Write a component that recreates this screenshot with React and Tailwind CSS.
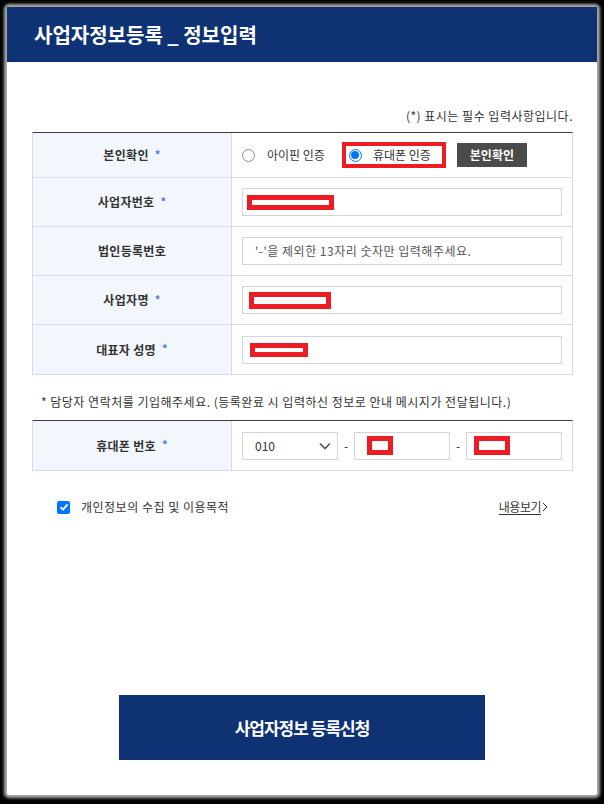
import React from 'react'

const font = { fontFamily: "'Noto Sans CJK KR', 'Noto Sans', sans-serif" }

function Star() {
  return <span className="ml-[6px] text-[11px] text-[#3f7ef0] relative -top-[1px]">*</span>
}

function Redact({ w, h = 15, className = '' }) {
  return <div className={`border-[5px] border-[#ed1c24] bg-white ${className}`} style={{ width: w, height: h }} />
}

function Field({ children, placeholder }) {
  return (
    <div className="h-[28px] w-full border border-[#d4d4d4] bg-white flex items-center px-[4px]">
      {placeholder ? (
        <span className="text-[12px] text-[#555] pl-[8px] tracking-[0.5px]">{placeholder}</span>
      ) : children}
    </div>
  )
}

function Row({ label, required, h = 'h-[49px]', last, children }) {
  return (
    <div className={`grid grid-cols-[199px_1fr] ${h} ${last ? '' : 'border-b border-[#dcdcdc]'}`}>
      <div className="bg-[#f3f6fc] border-r border-[#dcdcdc] flex items-center justify-center text-[12px] font-bold text-[#333] tracking-[0.3px]">
        {label}
        {required && <Star />}
      </div>
      <div className="flex items-center px-[10px]">{children}</div>
    </div>
  )
}

function Radio({ checked }) {
  return checked ? (
    <span className="w-[13px] h-[13px] rounded-full border-[1.5px] border-[#0075ff] flex items-center justify-center bg-white">
      <span className="w-[8px] h-[8px] rounded-full bg-[#0075ff]" />
    </span>
  ) : (
    <span className="w-[13px] h-[13px] rounded-full border border-[#8a8a8a] bg-white" />
  )
}

export default function App() {
  return (
    <div className="w-[604px] h-[804px] bg-black pt-[7px] pb-[9px] px-[7px]" style={font}>
      <div className="h-full bg-white flex flex-col shadow-[0_0_3px_3px_rgba(200,200,200,0.85)] rounded-[2px]">
        <div className="h-[55px] bg-[#0f3274] flex items-center px-[27px]">
          <h1 className="text-white text-[20px] font-bold">사업자정보등록 _ 정보입력</h1>
        </div>

        <div className="pl-[25px] pr-[24px]">
          <p className="mt-[46px] mb-[8px] text-right text-[12px] leading-[16px] text-[#333] tracking-[0.5px]">
            (*) 표시는 필수 입력사항입니다.
          </p>

          <div className="border-t border-t-[#3d3d3d] border-x border-b border-[#dcdcdc]">
            <Row label="본인확인" required h="h-[45px]">
              <div className="flex items-center">
                <Radio />
                <span className="ml-[12px] text-[12px] text-[#333]">아이핀 인증</span>
                <div className="ml-[17px] w-[104px] h-[26px] border-[4px] border-[#ed1c24] flex items-center pl-[3px]">
                  <Radio checked />
                  <span className="ml-[11px] text-[12px] text-[#333]">휴대폰 인증</span>
                </div>
                <button className="ml-[11px] w-[70px] h-[24px] bg-[#4b4b4b] text-white text-[12px] font-bold">본인확인</button>
              </div>
            </Row>
            <Row label="사업자번호" required>
              <Field><Redact w={87} /></Field>
            </Row>
            <Row label="법인등록번호">
              <Field placeholder="'-'을 제외한 13자리 숫자만 입력해주세요." />
            </Row>
            <Row label="사업자명" required>
              <Field><Redact w={82} h={17} className="ml-[2px]" /></Field>
            </Row>
            <Row label="대표자 성명" required last>
              <Field><Redact w={58} h={14} className="ml-[3px]" /></Field>
            </Row>
          </div>

          <p className="mt-[19px] mb-[10px] pl-[9px] text-[12px] leading-[16px] text-[#333] tracking-[0.5px]">
            * 담당자 연락처를 기입해주세요. (등록완료 시 입력하신 정보로 안내 메시지가 전달됩니다.)
          </p>

          <div className="border-t border-t-[#3d3d3d] border-x border-b border-[#dcdcdc]">
            <Row label="휴대폰 번호" required last>
              <div className="flex items-center w-full text-[12px] text-[#333]">
                <div className="h-[28px] w-[96px] border border-[#d4d4d4] flex items-center justify-between pl-[12px] pr-[6px]">
                  <span>010</span>
                  <svg width="12" height="8" viewBox="0 0 12 8" fill="none">
                    <path d="M1 1.5 L6 6.5 L11 1.5" stroke="#555" strokeWidth="1.6" />
                  </svg>
                </div>
                <span className="w-[16px] text-center">-</span>
                <div className="h-[28px] w-[96px] border border-[#d4d4d4] flex items-center pl-[12px]">
                  <Redact w={26} h={19} />
                </div>
                <span className="w-[16px] text-center">-</span>
                <div className="h-[28px] w-[96px] border border-[#d4d4d4] flex items-center pl-[7px]">
                  <Redact w={36} h={19} />
                </div>
              </div>
            </Row>
          </div>

          <div className="mt-[27px] px-[25px] flex items-center justify-between text-[12px] text-[#333]">
            <label className="flex items-center">
              <span className="w-[13px] h-[13px] rounded-[2px] bg-[#0075ff] flex items-center justify-center">
                <svg width="10" height="10" viewBox="0 0 10 10" fill="none">
                  <path d="M1.5 5.2 L4 7.6 L8.6 2.4" stroke="white" strokeWidth="1.8" />
                </svg>
              </span>
              <span className="ml-[11px] tracking-[0.5px]">개인정보의 수집 및 이용목적</span>
            </label>
            <span className="flex items-center">
              <span className="underline underline-offset-2 tracking-[-0.5px]">내용보기</span>
              <svg width="6" height="10" viewBox="0 0 6 10" fill="none" className="ml-[1px]">
                <path d="M1 1 L5 5 L1 9" stroke="#333" strokeWidth="1" />
              </svg>
            </span>
          </div>
        </div>

        <div className="mt-auto mb-[35px] flex justify-center">
          <button className="w-[366px] h-[65px] bg-[#0f3274] text-white text-[17px] font-semibold tracking-[-1px]">
            사업자정보 등록신청
          </button>
        </div>
      </div>
    </div>
  )
}
